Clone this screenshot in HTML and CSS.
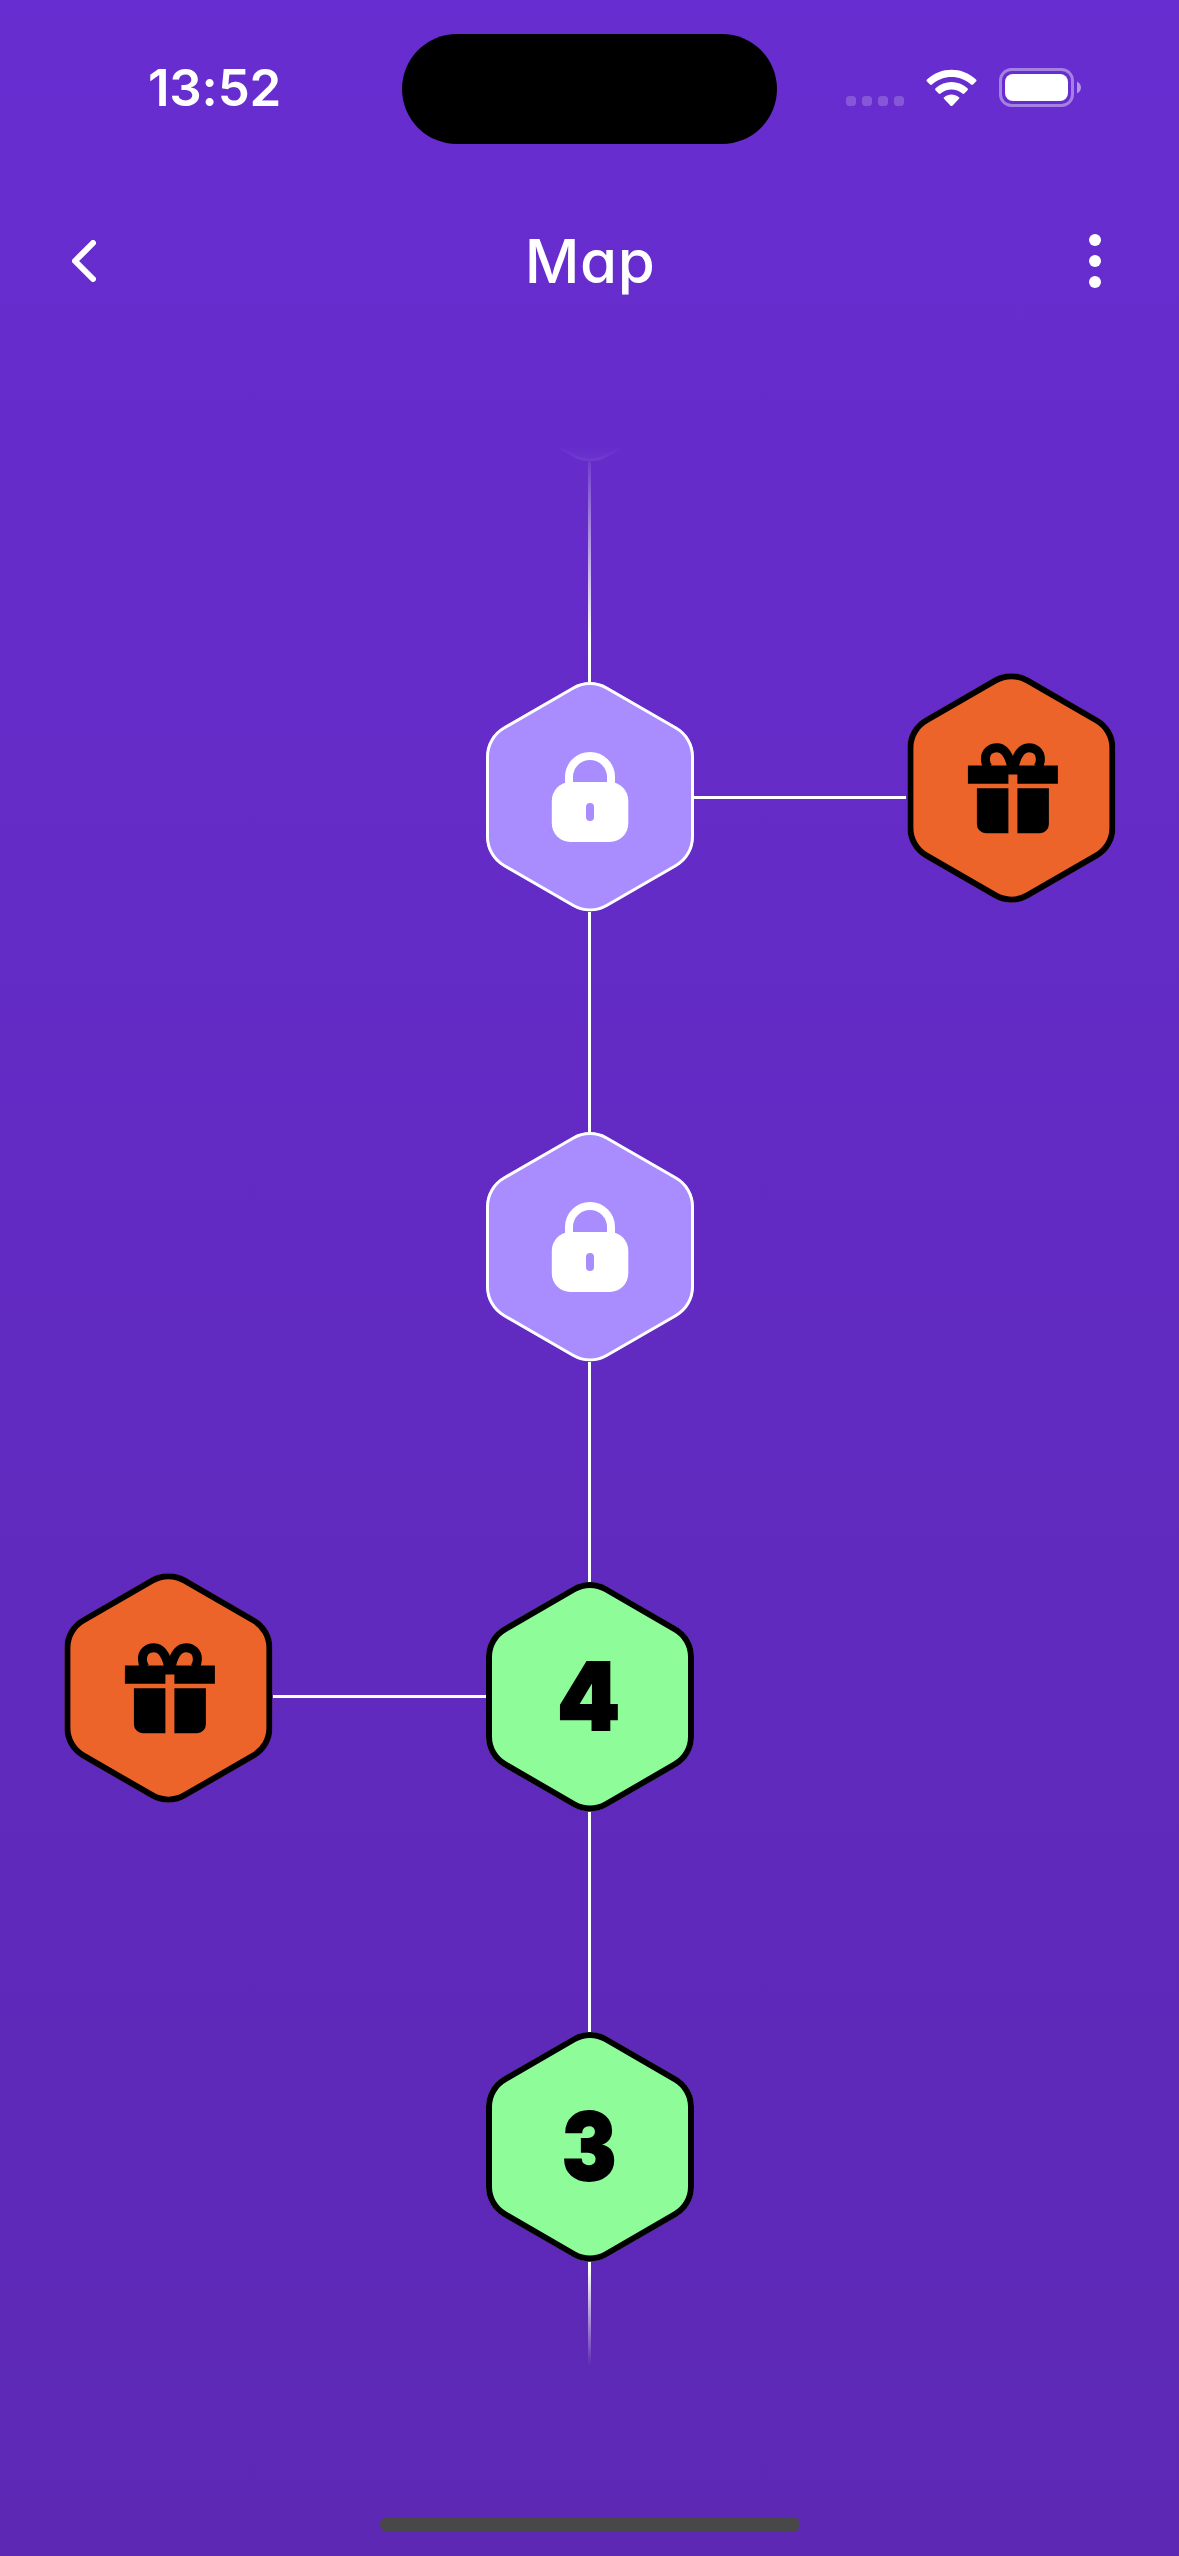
FILE: index.html
```html
<!DOCTYPE html>
<html lang="en">
<head>
<meta charset="utf-8">
<title>Map</title>
<link rel="stylesheet" href="styles.css">
</head>
<body>
<svg class="sprite" aria-hidden="true">
  <defs>
    <path id="hex-shape" d="M86.7 4.65A34.6 34.6 0 0 1 121.3 4.65L190.7 44.7A34.6 34.6 0 0 1 208 74.7V154.8A34.6 34.6 0 0 1 190.7 184.8L121.3 224.85A34.6 34.6 0 0 1 86.7 224.85L17.3 184.8A34.6 34.6 0 0 1 0 154.8V74.7A34.6 34.6 0 0 1 17.3 44.7Z"/>
    <clipPath id="hex-clip"><use href="#hex-shape"/></clipPath>
  </defs>
  <symbol id="locked" viewBox="0 0 208 229.5">
    <use href="#hex-shape" fill="#a98dff" stroke="#fff" stroke-width="6" clip-path="url(#hex-clip)"/>
    <path d="M83 101V95a21 21 0 0 1 42 0V101" fill="none" stroke="#fff" stroke-width="8"/>
    <rect x="65.8" y="100" width="76.5" height="60" rx="18.5" fill="#fff"/>
    <rect x="100" y="121" width="8" height="18" rx="4" fill="#a98dff"/>
  </symbol>
  <symbol id="gift" viewBox="0 0 208 229.5">
    <use href="#hex-shape" fill="#ed642b" stroke="#000" stroke-width="12" clip-path="url(#hex-clip)"/>
    <g fill="none" stroke="#000" stroke-width="9">
      <path d="M80.5 94C78.5 91 78 89 78 86C78 79 83 74.5 89.5 74.5C98 74.5 102.5 85 104.5 95"/>
      <path d="M130.5 94C132.5 91 133 89 133 86C133 79 128 74.5 121.5 74.5C113 74.5 108.5 85 106.5 95"/>
    </g>
    <path d="M60.5 92.3H150.5V110.5H110V101.3H101V110.5H60.5Z"/>
    <path d="M69.5 115H101V160H78.5A9 9 0 0 1 69.5 151ZM110 115H141.5V151A9 9 0 0 1 132.5 160H110Z"/>
  </symbol>
  <symbol id="open" viewBox="0 0 208 229.5">
    <use href="#hex-shape" fill="#8ffc9a" stroke="#000" stroke-width="12" clip-path="url(#hex-clip)"/>
  </symbol>
</svg>

<div class="screen">
  <div class="status">
    <div class="time">13:52</div>
    <div class="island"></div>
    <div class="indicators">
      <div class="signal"><i></i><i></i><i></i><i></i></div>
      <svg class="wifi" viewBox="0 0 51 38" fill="#fff">
        <path d="M1 10.5Q0 11.5 1 12.6L4 15.6Q5 16.4 6 15.5C17 5.5 34 5.5 45 15.5Q46 16.4 47 15.6L50 12.6Q51 11.5 50 10.5C36 -2.5 15 -2.5 1 10.5Z"/>
        <path d="M9.5 19.3Q8.6 20.3 9.5 21.3L12.7 24.5Q13.6 25.3 14.6 24.4C21 19.2 30 19.2 36.4 24.4Q37.4 25.3 38.3 24.5L41.5 21.3Q42.4 20.3 41.5 19.3C32 10.9 19 10.9 9.5 19.3Z"/>
        <path d="M18.2 28.3Q17.4 29.2 18.2 30.1L24.6 36.7Q25.5 37.5 26.4 36.7L32.8 30.1Q33.6 29.2 32.8 28.3C28.5 24.7 22.5 24.7 18.2 28.3Z"/>
      </svg>
      <svg class="battery" viewBox="0 0 82 39">
        <rect x="1.5" y="1.5" width="72" height="36" rx="11" fill="none" stroke="#fff" stroke-width="3" opacity=".4"/>
        <rect x="6" y="6" width="63" height="27" rx="8" fill="#fff"/>
        <path d="M78 13.5C83.3 16 83.3 23 78 25.5Z" fill="#fff" opacity=".5"/>
      </svg>
    </div>
  </div>

  <header class="bar">
    <svg class="back" viewBox="0 0 24 42"><path d="M21 3L3 21L21 39" fill="none" stroke="#fff" stroke-width="6" stroke-linecap="round" stroke-linejoin="round"/></svg>
    <h1 class="title">Map</h1>
    <svg class="more" viewBox="0 0 12 54" fill="#fff"><circle cx="6" cy="6" r="6"/><circle cx="6" cy="27" r="6"/><circle cx="6" cy="48" r="6"/></svg>
  </header>

  <main class="map">
    <div class="trail">
      <section class="step">
        <div class="side"></div>
        <div class="stop"><svg class="hex"><use href="#locked"/></svg><div class="down"></div></div>
        <div class="side"></div>
      </section>
      <section class="step">
        <div class="side"></div>
        <div class="stop"><svg class="hex"><use href="#locked"/></svg><div class="down"></div></div>
        <div class="side right"><div class="across"></div><svg class="hex prize"><use href="#gift"/></svg></div>
      </section>
      <section class="step">
        <div class="side"></div>
        <div class="stop"><svg class="hex"><use href="#locked"/></svg><div class="down"></div></div>
        <div class="side"></div>
      </section>
      <section class="step">
        <div class="side left"><svg class="hex prize"><use href="#gift"/></svg><div class="across"></div></div>
        <div class="stop"><div class="level"><svg class="hex"><use href="#open"/></svg><span class="number four">4</span></div><div class="down"></div></div>
        <div class="side"></div>
      </section>
      <section class="step">
        <div class="side"></div>
        <div class="stop"><div class="level"><svg class="hex"><use href="#open"/></svg><span class="number three">3</span></div><div class="down"></div></div>
        <div class="side"></div>
      </section>
    </div>
  </main>

  <footer class="foot"><div class="home"></div></footer>
</div>
</body>
</html>
```
FILE: styles.css
```css
* { box-sizing: border-box; }
body { margin: 0; }
.sprite { display: block; width: 0; height: 0; }
.screen {
  width: 1179px;
  height: 2556px;
  display: flex;
  flex-direction: column;
  overflow: hidden;
  color: #fff;
  font-family: Inter, "Liberation Sans", sans-serif;
  background: linear-gradient(#682dd0, #5c28b4);
}

.status {
  height: 177px;
  padding: 34px 98px 0 148px;
  display: flex;
  align-items: flex-start;
}
.time {
  width: 254px;
  padding-top: 24px;
  font-size: 51px;
  line-height: 60px;
  font-weight: 600;
  letter-spacing: -0.2px;
}
.island { width: 375px; height: 110px; border-radius: 55px; background: #000; }
.indicators {
  flex: 1;
  padding: 34px 0 0 69px;
  display: flex;
  align-items: flex-start;
}
.signal { display: flex; gap: 6px; padding-top: 28px; }
.signal i { width: 10px; height: 10px; border-radius: 3.5px; background: #fff; opacity: .2; }
.wifi { width: 51px; height: 38px; margin: 1px 22px 0 22px; flex: none; }
.battery { width: 82px; height: 39px; flex: none; }

.bar {
  height: 168px;
  padding: 0 78px 0 72px;
  display: grid;
  grid-template-columns: 24px 1fr 12px;
  align-items: center;
}
.back { width: 24px; height: 42px; }
.more { width: 12px; height: 54px; }
.title {
  margin: 0;
  padding-right: 5px;
  text-align: center;
  font-size: 60px;
  line-height: 70px;
  font-weight: 500;
  letter-spacing: 0.6px;
  font-feature-settings: "cv11";
}

.map {
  height: 1920px;
  margin-top: 101px;
  overflow: hidden;
  -webkit-mask-image: linear-gradient(transparent, #000 10%, #000 95%, transparent);
  mask-image: linear-gradient(transparent, #000 10%, #000 95%, transparent);
}
.trail { margin-top: -214px; }
.step {
  height: 450px;
  display: grid;
  grid-template-columns: 486px 208px 485px;
}
.hex { display: block; flex: none; width: 208px; height: 229.5px; }
.down { width: 3px; height: 220.5px; margin-left: 102px; background: #fff; }
.side { display: flex; align-items: flex-start; }
.left { padding-left: 64px; }
.across { width: 212px; height: 3px; margin-top: 114px; background: #fff; }
.right { gap: 1px; }
.left .across { width: 213px; margin: 113px 0 0 1px; }
.prize { margin-top: -9px; transform: translate(.4px, .2px); }
.level { display: grid; width: 208px; height: 229.5px; }
.level > * { grid-area: 1 / 1; }
.number {
  align-self: start;
  justify-self: center;
  margin-top: 57px;
  color: #000;
  font-size: 93px;
  line-height: 115px;
  font-weight: 900;
  -webkit-text-stroke: 2px #000;
}
.four { margin-right: 2px; transform: scaleX(.96); }
.three { margin-right: 2px; transform: scaleX(.87); }

.foot { flex: 1; display: flex; justify-content: center; align-items: flex-end; padding: 0 0 24px 1px; }
.home { width: 420px; height: 15px; border-radius: 8px; background: #484848; }
```
